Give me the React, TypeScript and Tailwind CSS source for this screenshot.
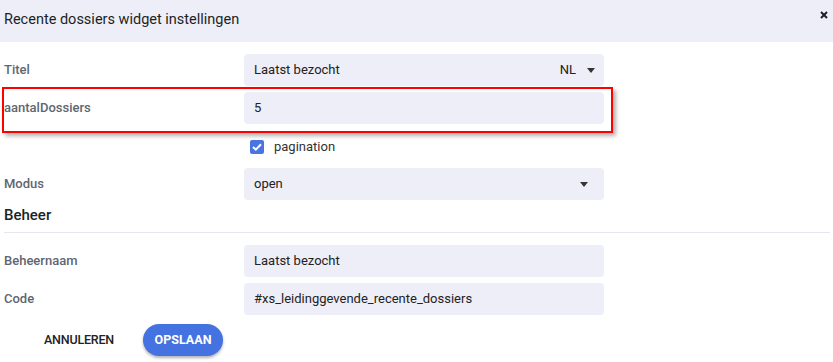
import React from "react";

function Row({ label, children }: { label: string; children: React.ReactNode }) {
  return (
    <div className="flex items-center h-[32px]">
      <div className="w-[240px] text-[13px] font-medium text-[#5f6670]">{label}</div>
      {children}
    </div>
  );
}

function Field({ value, right }: { value: string; right?: React.ReactNode }) {
  return (
    <div className="flex items-center w-[360px] h-[32px] rounded-[4px] bg-[#eeeef8] pl-[10px] pr-[9px] text-[13px] text-[#222]">
      <span className="flex-1">{value}</span>
      {right}
    </div>
  );
}

const Caret = () => (
  <svg width="8" height="5" viewBox="0 0 8 5"><path d="M0 0h8L4 5z" fill="#333" /></svg>
);

export default function App() {
  return (
    <div className="w-[833px] h-[362px] bg-white overflow-hidden" style={{ fontFamily: "Roboto, 'Noto Sans', sans-serif" }}>
      {/* Header */}
      <div className="flex items-center justify-between h-[42px] bg-[#eeeef8] pl-[4px] pr-[5px]">
        <h1 className="text-[14.5px] text-[#1b1f24] -mt-[2px]">Recente dossiers widget instellingen</h1>
        <svg width="8" height="8" viewBox="0 0 8 8" className="-mt-[13px]">
          <path d="M1 1l6 6M7 1L1 7" stroke="#1b1f24" strokeWidth="2" />
        </svg>
      </div>

      <div className="pl-[4px] pt-[12px]">
        <Row label="Titel">
          <Field value="Laatst bezocht" right={<span className="flex items-center gap-[11px]">NL <Caret /></span>} />
        </Row>

        <div className="relative mt-[6px]">
          <Row label="aantalDossiers">
            <Field value="5" />
          </Row>
          <div className="absolute left-[-2px] top-[-5px] w-[611px] h-[46px] border-2 border-[#ff0000] shadow-[3px_3px_4px_rgba(0,0,0,0.3)]" />
        </div>

        <div className="flex items-center h-[14px] mt-[16px] ml-[246px] gap-[10px]">
          <span className="flex items-center justify-center w-[14px] h-[14px] rounded-[2px] bg-[#4a74e0]">
            <svg width="10" height="8" viewBox="0 0 10 8"><path d="M1 4l2.8 2.6L9 1.2" stroke="#fff" strokeWidth="2" fill="none" /></svg>
          </span>
          <span className="text-[13px] text-[#333]">pagination</span>
        </div>

        <div className="mt-[14px]">
          <Row label="Modus">
            <Field value="open" right={<span className="mr-[7px]"><Caret /></span>} />
          </Row>
        </div>

        <div className="mt-[4px] text-[15px] font-medium text-[#1b1f24] h-[22px] leading-[22px]">Beheer</div>
        <div className="mt-[6px] mr-[3px] border-t border-[#e6e6ee]" />

        <div className="mt-[12px] flex flex-col gap-[6px]">
          <Row label="Beheernaam">
            <Field value="Laatst bezocht" />
          </Row>
          <Row label="Code">
            <Field value="#xs_leidinggevende_recente_dossiers" />
          </Row>
        </div>

        <div className="flex items-center mt-[9px] h-[32px]">
          <button className="ml-[40px] text-[12.5px] font-medium text-[#222] tracking-[-0.2px]">ANNULEREN</button>
          <button className="ml-[29px] w-[80px] h-[32px] rounded-full bg-[#4472e0] text-white text-[12.5px] font-bold shadow-[0_2px_3px_rgba(0,0,0,0.3)]">OPSLAAN</button>
        </div>
      </div>
    </div>
  );
}
